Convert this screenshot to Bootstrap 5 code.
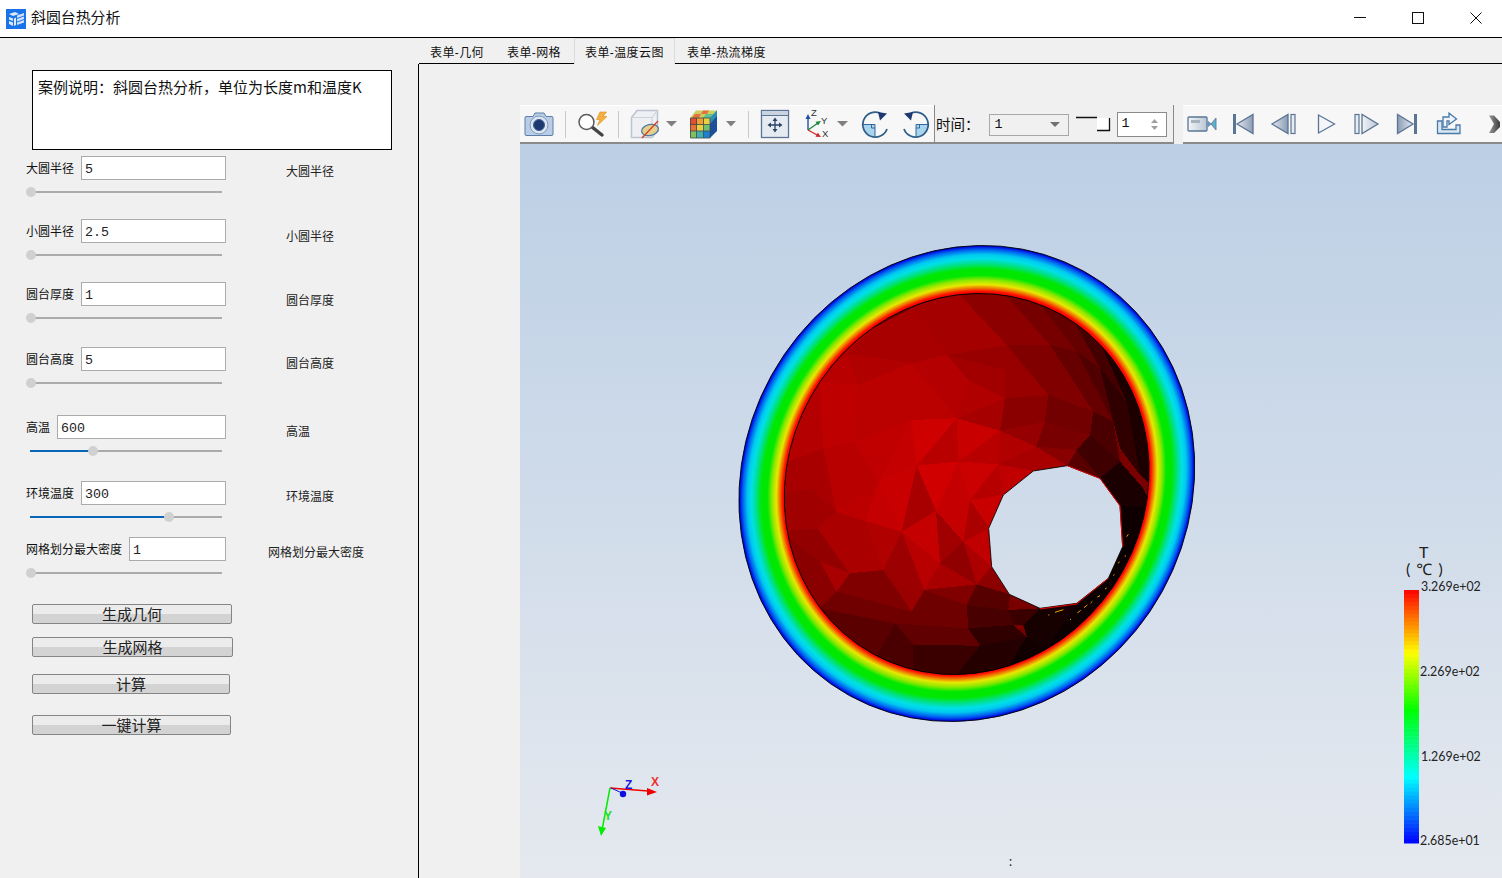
<!DOCTYPE html>
<html lang="zh">
  <head>
    <meta charset="UTF-8" />
    <meta name="viewport" content="width=device-width, initial-scale=1.0" />
    <title>斜圆台热分析</title>
    <link
      rel="stylesheet"
      href="https://cdn.jsdelivr.net/npm/bootstrap@5.3.0/dist/css/bootstrap.min.css"
    />
    <style>
      html, body { height: 100%; overflow: hidden; }
      body { background: #f0f0f0; color: #111; font-family: "Liberation Sans", "Noto Sans CJK SC", sans-serif; font-size: 12px; }
      svg { display: block; flex: none; }

      .titlebar { height: 38px; background: #fff; border-bottom: 1px solid #000; padding-left: 6px; }
      .app-title { font-size: 14.9px; margin-left: 5px; line-height: 20px; margin-bottom: 1px; }
      .win-btns { gap: 46px; padding-right: 20px; margin-bottom: 1px; }

      .workspace { height: 840px; }
      .side { width: 418px; flex: none; padding: 32px 0 0 26px; }
      .case-box { width: 360px; height: 80px; margin-left: 6px; padding: 6px 5px; background: #fff; border: 1px solid #000; font-family: "Noto Sans CJK SC", "Liberation Sans", sans-serif; font-size: 15px; line-height: 20px; white-space: nowrap; }

      .param-left { width: 200px; flex: none; padding-bottom: 5px; }
      .param-row { gap: 7px; height: 24px; }
      .param-left label { line-height: 22px; padding-top: 2px; flex: none; }
      .value-input { height: 24px; min-height: 0; padding: 2px 3px 0; border: 1px solid #ababab; border-radius: 0; background: #fff; color: #222; font-family: "Liberation Mono", monospace; font-size: 13.33px; line-height: 20px; }
      .note-text { line-height: 16px; color: #222; }

      .p1 { margin-top: 6px; } .p1 .note-text { margin: 8px 0 0 60px; }
      .p2 { margin-top: 17px; } .p2 .note-text { margin: 10px 0 0 60px; }
      .p3 { margin-top: 17px; } .p3 .note-text { margin: 11px 0 0 60px; }
      .p4 { margin-top: 19px; } .p4 .note-text { margin: 9px 0 0 60px; }
      .p5 { margin-top: 22px; } .p5 .note-text { margin: 9px 0 0 60px; }
      .p6 { margin-top: 20px; } .p6 .note-text { margin: 8px 0 0 60px; }
      .p7 { margin-top: 10px; } .p7 .note-text { margin: 8px 0 0 42px; }

      .hslider { display: block; width: 196px; height: 10px; margin: 7px 0 0; padding: 0; -webkit-appearance: none; appearance: none; background: transparent; --fill: 0%; }
      .hslider::-webkit-slider-runnable-track { height: 10px; background: linear-gradient(#0a64b8, #0a64b8) 4px center / var(--fill) 2px no-repeat, linear-gradient(#ababab, #ababab) 4px center / calc(100% - 4px) 2px no-repeat; }
      .hslider::-webkit-slider-thumb { -webkit-appearance: none; width: 10px; height: 10px; border-radius: 50%; background: #d0d0d0; border: 0; }

      .act-btn { display: block; height: 20px; margin-left: 6px; padding: 0; border: 1px solid #858585; border-radius: 2px; background: linear-gradient(#ececec 50%, #d3d3d3 50%); color: #222; font-size: 15px; line-height: 19px; }
      .a1 { width: 200px; margin-top: 21px; }
      .a2 { width: 201px; margin-top: 13px; }
      .a3 { width: 198px; margin-top: 17px; }
      .a4 { width: 199px; margin-top: 21px; }

      .main-pane { min-width: 0; }
      .tab-strip { height: 26px; margin-left: 1px; padding-left: 0; border-bottom: 1px solid #000; flex-wrap: nowrap; }
      .tab-item { height: 25px; padding: 7px 10px 0 11px; line-height: 16px; color: #111; text-decoration: none; white-space: nowrap; letter-spacing: .4px; }
      .tab-item.t1 { width: 77px; }
      .tab-item.t2 { width: 78px; }
      .tab-item.t3 { width: 101px; border: 1px solid #dcdcdc; border-bottom: 0; height: 26px; padding: 6px 0 0 10px; margin-bottom: -1px; background: #f0f0f0; }
      .tab-item.t4 { padding-left: 12px; }

      .tab-body { height: 814px; padding: 41px 0 0 101px; border-left: 1px solid #000; overflow: hidden; }
      .tool-row { height: 39px; width: 982px; }
      .tool-group { height: 39px; background: #f7f7f7; border-top: 1px solid #fff; border-bottom: 2px solid #8a8a8a; }
      .time-group { width: 240px; height: 39px; flex: none; border-left: 1px solid #8a8a8a; border-right: 1px solid #8a8a8a; border-bottom: 2px solid #8a8a8a; padding: 0 0 0 1px; font-size: 14.5px; }
      .time-label { font-family: "Noto Sans CJK SC", sans-serif; white-space: nowrap; }
      .right-tools { margin-left: 9px; overflow: hidden; }
      .combo-box { width: 80px; height: 22px; margin: 2px 0 0 9px; padding-left: 5px; border: 1px solid #a8a8a8; background: #f0f0f0; font-family: "Liberation Mono", monospace; font-size: 13.33px; }
      .step-mark { margin-left: 7px; }
      .spin-box { width: 50px; height: 25px; margin: 1px 0 0 6px; padding-left: 4px; border: 1px solid #8a8a8a; background: #fff; font-family: "Liberation Mono", monospace; font-size: 13.33px; }

      .view3d { width: 982px; height: 734px; background: linear-gradient(#bccfe5, #e5e9ef); }
      .facets polygon, .facets rect { shape-rendering: crispEdges; }
      .legend-text { font-family: Lato, "Noto Sans", sans-serif; font-size: 12.4px; fill: #222; }
      .legend-title { font-size: 16px; word-spacing: 2px; }
      .triad-text { font-family: "Liberation Sans", sans-serif; font-size: 12px; font-weight: 700; }
      .tip-text { font-family: "Liberation Sans", sans-serif; font-size: 9.5px; fill: #333; }
    </style>
  </head>
  <body>
    <header class="titlebar d-flex align-items-center">
      <svg width="20" height="20" viewBox="0 0 20 20" aria-hidden="true">
        <rect width="20" height="20" fill="#1a73e8" />
        <path d="M3 5 9 3 13 5 7 7Z M3 8 7 9.500V12L3 10.500Z M3 12 7 13.500V17L3 15Z M8 9.500 10 8.500V16L8 17Z" fill="#dbe9fb" />
        <path d="M11 6.500 18 4V6.500L11 9Z M11 10 18 7.500V10L11 12.500Z M11 13.500 18 11V13.500L11 16Z" fill="#cfe2fa" />
      </svg>
      <span class="app-title">斜圆台热分析</span>
      <div class="win-btns d-flex align-items-center ms-auto">
        <svg width="12" height="12" viewBox="0 0 12 12"><path d="M0 5.500H12" stroke="#111" fill="none" /></svg>
        <svg width="12" height="12" viewBox="0 0 12 12"><rect x=".5" y=".5" width="11" height="11" stroke="#111" fill="none" /></svg>
        <svg width="12" height="12" viewBox="0 0 12 12"><path d="M.5 .5 11.500 11.500M11.500 .5 .5 11.500" stroke="#111" fill="none" /></svg>
      </div>
    </header>

    <div class="workspace d-flex">
      <aside class="side">
        <div class="case-box">案例说明&#xFF1A;斜圆台热分析&#xFF0C;单位为长度m和温度K</div>

        <div class="p1 d-flex">
          <div class="param-left">
            <div class="param-row d-flex"><label>大圆半径</label><input class="form-control value-input" value="5" /></div>
            <input type="range" class="hslider" min="0" max="100" value="0" />
          </div>
          <span class="note-text">大圆半径</span>
        </div>
        <div class="p2 d-flex">
          <div class="param-left">
            <div class="param-row d-flex"><label>小圆半径</label><input class="form-control value-input" value="2.5" /></div>
            <input type="range" class="hslider" min="0" max="100" value="0" />
          </div>
          <span class="note-text">小圆半径</span>
        </div>
        <div class="p3 d-flex">
          <div class="param-left">
            <div class="param-row d-flex"><label>圆台厚度</label><input class="form-control value-input" value="1" /></div>
            <input type="range" class="hslider" min="0" max="100" value="0" />
          </div>
          <span class="note-text">圆台厚度</span>
        </div>
        <div class="p4 d-flex">
          <div class="param-left">
            <div class="param-row d-flex"><label>圆台高度</label><input class="form-control value-input" value="5" /></div>
            <input type="range" class="hslider" min="0" max="100" value="0" />
          </div>
          <span class="note-text">圆台高度</span>
        </div>
        <div class="p5 d-flex">
          <div class="param-left">
            <div class="param-row d-flex"><label>高温</label><input class="form-control value-input" value="600" /></div>
            <input type="range" class="hslider" min="0" max="100" step="0.5" value="33.5" style="--fill: 33%" />
          </div>
          <span class="note-text">高温</span>
        </div>
        <div class="p6 d-flex">
          <div class="param-left">
            <div class="param-row d-flex"><label>环境温度</label><input class="form-control value-input" value="300" /></div>
            <input type="range" class="hslider" min="0" max="100" value="74" style="--fill: 72%" />
          </div>
          <span class="note-text">环境温度</span>
        </div>
        <div class="p7 d-flex">
          <div class="param-left">
            <div class="param-row d-flex"><label>网格划分最大密度</label><input class="form-control value-input" value="1" /></div>
            <input type="range" class="hslider" min="0" max="100" value="0" />
          </div>
          <span class="note-text">网格划分最大密度</span>
        </div>

        <button type="button" class="btn act-btn a1">生成几何</button>
        <button type="button" class="btn act-btn a2">生成网格</button>
        <button type="button" class="btn act-btn a3">计算</button>
        <button type="button" class="btn act-btn a4">一键计算</button>
      </aside>

      <main class="main-pane flex-grow-1">
        <nav class="tab-strip nav">
          <a class="tab-item t1" href="#">表单-几何</a>
          <a class="tab-item t2" href="#">表单-网格</a>
          <a class="tab-item t3" href="#">表单-温度云图</a>
          <a class="tab-item t4" href="#">表单-热流梯度</a>
        </nav>

        <div class="tab-body">
          <div class="tool-row d-flex">
            <div class="tool-group d-flex">
              <svg width="45" height="36" viewBox="520 106 45 36">
                <defs>
                  <linearGradient id="steel" x1="0" y1="0" x2="1" y2="0"><stop offset="0" stop-color="#8a9cb4" /><stop offset="1" stop-color="#e4e9f0" /></linearGradient>
                  <linearGradient id="steelR" x1="0" y1="0" x2="1" y2="0"><stop offset="0" stop-color="#e4e9f0" /><stop offset="1" stop-color="#8a9cb4" /></linearGradient>
                  <linearGradient id="barFill" x1="0" y1="0" x2="1" y2="0"><stop offset="0" stop-color="#f3f5f8" /><stop offset="1" stop-color="#b9c6d6" /></linearGradient>
                  <linearGradient id="edgeShade" x1="0" y1="0" x2="1" y2="0"><stop offset="0" stop-color="#9a9a9a" /><stop offset="1" stop-color="#3a3a3a" /></linearGradient>
                </defs>
                <path d="M526 116.500H533L535 113H544L546 116.500H552Q553 116.500 553 118V134Q553 135.500 552 135.500H526Q525 135.500 525 134V118Q525 116.500 526 116.500Z" fill="#b9cee6" stroke="#5c7ea8" />
                <circle cx="539" cy="125" r="9" fill="#dbe6f2" stroke="#7e9abb" />
                <circle cx="539" cy="125" r="5.500" fill="#1c3a70" stroke="#3f5f90" />
              </svg>
              <svg width="53" height="36" viewBox="565 106 53 36">
                <path d="M565.500 111V138" stroke="#c9c9c9" />
                <path d="M592 127 602 135" stroke="#444" stroke-width="3.500" stroke-linecap="round" />
                <circle cx="586.500" cy="122" r="7.500" fill="#fff" stroke="#5a5a5a" stroke-width="1.500" />
                <path d="M600 112H606.500L603 116.500H607L597.500 125.500 600 119.500H596.500Z" fill="#f3b040" stroke="#dc8f18" stroke-width=".6" />
              </svg>
              <svg width="66" height="36" viewBox="618 106 66 36">
                <path d="M618.500 111V138" stroke="#c9c9c9" />
                <path d="M631.500 117.500 637 110.500H657.500V131L652 137.500H631.500Z" fill="#eef0f3" stroke="#bcc4d0" stroke-width="1.500" />
                <path d="M631.500 117.500H652V137.500M652 117.500 657.500 110.500" fill="none" stroke="#cdd3dc" stroke-width="1.200" />
                <ellipse cx="650" cy="130" rx="8.500" ry="5.500" transform="rotate(-12 650 130)" fill="#e4cf8c" stroke="#4f79a8" stroke-width="1.300" />
                <path d="M642 138 658 121" stroke="#d0452a" stroke-width="1.400" />
                <path d="M666 121H677L671.500 126.500Z" fill="#808080" />
              </svg>
              <svg width="64" height="36" viewBox="684 106 64 36">
                <path d="M690 118 696 110.500H717L710 118Z" fill="#c8d060" />
                <path d="M692 118 695 114H701L699 118ZM701 114 703 110.500H709L707 114Z" fill="#e87040" />
                <path d="M703 118 706 114H713L710 118Z" fill="#60c090" />
                <path d="M710 118 717 110.500V131L710 138Z" fill="#1d4f9c" />
                <path d="M710 118 717 110.500V116L710 124Z" fill="#2a90b0" />
                <rect x="690" y="118" width="7" height="7" fill="#e05030" />
                <rect x="697" y="118" width="7" height="7" fill="#f0a030" />
                <rect x="704" y="118" width="6" height="7" fill="#e8d040" />
                <rect x="690" y="125" width="7" height="6" fill="#e87030" />
                <rect x="697" y="125" width="7" height="6" fill="#e8d040" />
                <rect x="704" y="125" width="6" height="6" fill="#70c070" />
                <rect x="690" y="131" width="7" height="7" fill="#80c060" />
                <rect x="697" y="131" width="7" height="7" fill="#40b0b0" />
                <rect x="704" y="131" width="6" height="7" fill="#2080d0" />
                <path d="M696.500 118V138M703.500 118V138M690 124.500H710M690 131H710M690.500 118V138H710V118Z" fill="none" stroke="#3a4a50" stroke-width=".8" />
                <path d="M726 121H736L731 126.500Z" fill="#808080" />
              </svg>
              <svg width="50" height="36" viewBox="748 106 50 36">
                <path d="M748.500 111V138" stroke="#c9c9c9" />
                <rect x="761.500" y="110.500" width="27" height="27" fill="#e6ebf1" stroke="#5b7595" stroke-width="1.300" />
                <rect x="762" y="111" width="26" height="4" fill="#c9d4e0" />
                <path d="M762 115.500H788" stroke="#5b7595" />
                <path d="M775 120.500V129.500M770.500 125H779.500" stroke="#2a4468" stroke-width="1.300" />
                <path d="M775 117.500 777.500 121H772.500ZM775 132.500 777.500 129H772.500ZM767.500 125 771 122.500V127.500ZM782.500 125 779 122.500V127.500Z" fill="#2a4468" />
              </svg>
              <svg width="57" height="36" viewBox="798 106 57 36">
                <path d="M808 130V118" stroke="#2050a8" stroke-width="1.400" />
                <path d="M808 114 805.500 119H810.500Z" fill="#2050a8" />
                <path d="M808 130 818 123" stroke="#1c8a3c" stroke-width="1.400" />
                <path d="M821 121 815.500 121.800 818 125.500Z" fill="#1c8a3c" />
                <path d="M808 130 818 135.500" stroke="#d02828" stroke-width="1.400" />
                <path d="M821 137 815.500 136.800 817.800 132.800Z" fill="#d02828" />
                <text class="tip-text" x="811" y="116">Z</text>
                <text class="tip-text" x="821" y="124">Y</text>
                <text class="tip-text" x="822" y="137">X</text>
                <path d="M837 121H848L842.500 126.500Z" fill="#808080" />
              </svg>
              <svg width="40" height="36" viewBox="855 106 40 36">
                <path d="M875 124.500H863.500A11.500 11.500 0 0 0 875 136Z" fill="#a9d4ee" />
                <path d="M863 124.500H875V136.500M871.500 124.500V128H875" fill="none" stroke="#2f6a98" />
                <path d="M887 129A12.500 12.500 0 1 1 880 113" fill="none" stroke="#2f5f8a" stroke-width="1.800" />
                <path d="M878 112 887 113.500 880 120.500Z" fill="#1c3a70" />
              </svg>
              <svg width="39" height="36" viewBox="895 106 39 36">
                <path d="M916 124.500H927.500A11.500 11.500 0 0 1 916 136Z" fill="#a9d4ee" />
                <path d="M928 124.500H916V136.500M919.500 124.500V128H916" fill="none" stroke="#2f6a98" />
                <path d="M904 129A12.500 12.500 0 1 0 911 113" fill="none" stroke="#2f5f8a" stroke-width="1.800" />
                <path d="M913 112 904 113.500 911 120.500Z" fill="#1c3a70" />
              </svg>
            </div>

            <div class="time-group d-flex align-items-center">
              <span class="time-label">时间&#xFF1A;</span>
              <div class="combo-box d-flex align-items-center justify-content-between">
                <span>1</span>
                <svg width="10" height="5" viewBox="0 0 10 5" class="me-2"><path d="M0 0H10L5 5Z" fill="#707070" /></svg>
              </div>
              <svg class="step-mark" width="35" height="16" viewBox="0 0 35 16">
                <rect x="21" y="2" width="12" height="12" fill="#fff" />
                <path d="M0 1.500H21M21 14.500H33.500V2" fill="none" stroke="#111" stroke-width="1.300" />
              </svg>
              <div class="spin-box d-flex align-items-center justify-content-between">
                <span>1</span>
                <svg class="me-2" width="7" height="13" viewBox="0 0 7 13"><path d="M3.500 1 7 5H0ZM3.500 12 7 8H0Z" fill="#a0a0a0" /></svg>
              </div>
            </div>

            <div class="tool-group right-tools flex-grow-1 d-flex">
              <svg width="319" height="36" viewBox="1183 106 319 36">
                <rect x="1188" y="117" width="19" height="14" rx="1" fill="url(#barFill)" stroke="#5b7595" stroke-width="1.300" />
                <rect x="1191" y="120" width="9" height="3" fill="#a8b2be" />
                <path d="M1208 121.500 1211 124 1216 118V130L1211 124 1208 126.500Z" fill="#58aecb" stroke="#6a85a5" />

                <path d="M1234.500 114V134" stroke="#5b7595" stroke-width="3" />
                <path d="M1237 124 1253 114.500V133.500Z" fill="url(#steelR)" stroke="#5b7595" stroke-width="1.300" />

                <path d="M1288 114.500V133.500L1272 124Z" fill="url(#steelR)" stroke="#5b7595" stroke-width="1.300" />
                <rect x="1291" y="114.500" width="4" height="19" fill="#e8ecf1" stroke="#5b7595" stroke-width="1.200" />

                <path d="M1318.500 115V133L1334.500 124Z" fill="#f4f6f9" stroke="#5b7595" stroke-width="1.300" />

                <rect x="1355" y="114.500" width="4" height="19" fill="#e8ecf1" stroke="#5b7595" stroke-width="1.200" />
                <path d="M1362 114.500V133.500L1378 124Z" fill="url(#barFill)" stroke="#5b7595" stroke-width="1.300" />

                <path d="M1397.500 114.500V133.500L1413 124Z" fill="url(#steel)" stroke="#5b7595" stroke-width="1.300" />
                <path d="M1415.500 114V134" stroke="#5b7595" stroke-width="3" />

                <path d="M1437.500 121V133.500H1460V125H1456V129.500H1442V121Z" fill="#dbe8f4" stroke="#4a7aa8" stroke-width="1.300" />
                <path d="M1443 127V117H1449V113L1456.500 119 1449 124.500V121H1447V127Z" fill="#eef4fa" stroke="#4a7aa8" stroke-width="1.300" />

                <path d="M1489 115.500H1494L1500 122V127L1494 133H1489L1494 124Z" fill="url(#edgeShade)" />
              </svg>
            </div>
          </div>

          <div class="view3d">
            <svg width="982" height="734" viewBox="520 144 982 734">
              <defs>
                <radialGradient id="tempRing" cx=".5" cy=".5" r=".5">
                  <stop offset=".8" stop-color="#f00000" />
                  <stop offset=".808" stop-color="#ff1000" />
                  <stop offset=".82" stop-color="#f07000" />
                  <stop offset=".836" stop-color="#e8e800" />
                  <stop offset=".855" stop-color="#90e800" />
                  <stop offset=".875" stop-color="#00e800" />
                  <stop offset=".9" stop-color="#00e800" />
                  <stop offset=".925" stop-color="#00e090" />
                  <stop offset=".945" stop-color="#00e0e8" />
                  <stop offset=".962" stop-color="#00c8f0" />
                  <stop offset=".983" stop-color="#0060f0" />
                  <stop offset=".995" stop-color="#0010e0" />
                  <stop offset="1" stop-color="#0000c8" />
                </radialGradient>
                <linearGradient id="holeBg" gradientUnits="userSpaceOnUse" x1="0" y1="-273" x2="0" y2="1929">
                  <stop offset="0" stop-color="#bccfe5" />
                  <stop offset="1" stop-color="#e5e9ef" />
                </linearGradient>
                <clipPath id="innerClip">
                  <ellipse cx="710" cy="747" rx="536" ry="582" transform="rotate(29 710 747)" />
                </clipPath>
              </defs>

              <ellipse cx="966.800" cy="483.500" rx="223.300" ry="242.400" transform="rotate(29 966.800 483.500)" fill="url(#tempRing)" stroke="#000" stroke-width=".8" />

              <!-- cone mesh, coordinates are 3x from the ring's corner -->
              <g transform="translate(730 235) scale(.33333)">
                <g class="facets" clip-path="url(#innerClip)">
                  <rect x="100" y="100" width="1200" height="1300" fill="#7a0000" />
                  <rect x="100" y="300" width="330" height="780" fill="#a80000" />
                  <polygon fill="#a80000" points="430,280 555,215 650,360 545,385 350,355" />
                  <polygon fill="#a40000" points="555,215 555,150 680,170 830,330 650,360" />
                  <polygon fill="#980000" points="650,360 830,330 955,480 825,490" />
                  <polygon fill="#8c0000" points="680,170 800,150 960,330 830,330" />
                  <polygon fill="#800000" points="830,330 960,330 1090,530 955,480" />
                  <polygon fill="#760000" points="800,150 900,170 1040,350 960,330" />
                  <polygon fill="#660000" points="960,330 1040,350 1150,560 1090,530" />
                  <polygon fill="#640000" points="900,170 1010,220 1110,400 1040,350" />
                  <polygon fill="#500000" points="1040,350 1110,400 1170,640 1150,560" />
                  <polygon fill="#440000" points="1010,220 1100,300 1190,500 1110,400" />
                  <polygon fill="#300000" points="1110,400 1190,500 1230,720 1170,640" />
                  <polygon fill="#1c0000" points="1100,300 1270,480 1270,760 1230,720 1190,500" />
                  <polygon fill="#b00000" points="350,355 545,385 385,450" />
                  <polygon fill="#bb0000" points="385,450 545,385 680,550 545,555 375,620" />
                  <polygon fill="#b40000" points="545,385 650,360 715,435 680,550" />
                  <polygon fill="#a20000" points="650,360 825,405 825,490 715,435" />
                  <polygon fill="#b00000" points="715,435 825,490 680,550" />
                  <polygon fill="#8a0000" points="825,490 955,480 945,560 810,587" />
                  <polygon fill="#a60000" points="825,490 810,587 680,550" />
                  <polygon fill="#720000" points="955,480 1090,530 1080,600 945,560" />
                  <polygon fill="#4a0000" points="1090,530 1150,560 1170,680 1080,600" />
                  <polygon fill="#780000" points="945,560 1080,600 1040,645 918,635" />
                  <polygon fill="#960000" points="810,587 945,560 918,635" />
                  <polygon fill="#b00000" points="810,587 918,635 805,688" />
                  <polygon fill="#c80000" points="680,550 810,587 685,680" />
                  <polygon fill="#b80000" points="685,680 810,587 805,688" />
                  <polygon fill="#880000" points="918,635 1040,645 1012,692" />
                  <polygon fill="#a80000" points="805,688 918,635 1012,692 910,708" />
                  <polygon fill="#3e0000" points="1040,645 1080,600 1170,680 1110,730" />
                  <polygon fill="#580000" points="1012,692 1040,645 1110,730" />
                  <polygon fill="#c00000" points="805,688 910,708 820,780" />
                  <polygon fill="#cb0000" points="685,680 805,688 720,795" />
                  <polygon fill="#b60000" points="720,795 805,688 820,780" />
                  <polygon fill="#cf0000" points="545,555 680,550 560,692" />
                  <polygon fill="#b80000" points="680,550 685,680 560,692" />
                  <polygon fill="#d00000" points="560,692 685,680 618,828" />
                  <polygon fill="#c40000" points="685,680 720,795 618,828" />
                  <polygon fill="#c80000" points="445,745 560,692 515,890" />
                  <polygon fill="#a80000" points="560,692 618,828 515,890" />
                  <polygon fill="#c40000" points="618,828 720,795 700,920" />
                  <polygon fill="#c80000" points="720,795 820,780 778,880" />
                  <polygon fill="#aa0000" points="720,795 778,880 700,920" />
                  <polygon fill="#a00000" points="618,828 700,920 630,985" />
                  <polygon fill="#c40000" points="515,890 618,828 630,985" />
                  <polygon fill="#c00000" points="700,920 778,880 785,995" />
                  <polygon fill="#ac0000" points="700,920 785,995 740,1048" />
                  <polygon fill="#900000" points="630,985 700,920 740,1048" />
                  <polygon fill="#b80000" points="515,890 630,985 583,1065" />
                  <polygon fill="#9c0000" points="515,890 583,1065 460,1005" />
                  <polygon fill="#a80000" points="630,985 740,1048 583,1065" />
                  <polygon fill="#8c0000" points="740,1048 785,995 840,1078" />
                  <polygon fill="#560000" points="740,1048 840,1078 835,1125 710,1110" />
                  <polygon fill="#800000" points="583,1065 740,1048 710,1110" />
                  <polygon fill="#b00000" points="405,858 515,890 460,1005" />
                  <polygon fill="#c40000" points="445,745 515,890 405,858" />
                  <polygon fill="#c00000" points="375,620 545,555 445,745" />
                  <polygon fill="#c40000" points="545,555 560,692 445,745" />
                  <polygon fill="#bf0000" points="270,440 385,450 375,620 280,640" />
                  <polygon fill="#b80000" points="350,355 385,450 270,440" />
                  <polygon fill="#b00000" points="430,280 350,355 270,440 300,300" />
                  <polygon fill="#b80000" points="280,640 375,620 445,745 318,830" />
                  <polygon fill="#bc0000" points="318,830 445,745 405,858" />
                  <polygon fill="#a80000" points="150,690 280,640 318,830 245,760" />
                  <polygon fill="#b40000" points="270,440 280,640 150,690 180,500" />
                  <polygon fill="#a00000" points="150,780 245,760 318,830 262,880 150,890" />
                  <polygon fill="#aa0000" points="318,830 405,858 460,1005 360,1015 262,880" />
                  <polygon fill="#920000" points="150,890 262,880 360,1015 270,980" />
                  <polygon fill="#8a0000" points="150,890 270,980 320,1070 265,1120 190,1020" />
                  <polygon fill="#800000" points="320,1070 360,1015 460,1005 545,1130" />
                  <polygon fill="#9a0000" points="460,1005 583,1065 545,1130" />
                  <polygon fill="#6e0000" points="545,1130 583,1065 710,1110 715,1180 495,1165" />
                  <polygon fill="#700000" points="265,1120 320,1070 545,1130 495,1165" />
                  <polygon fill="#5a0000" points="265,1120 495,1165 440,1265 350,1210" />
                  <polygon fill="#600000" points="495,1165 715,1180 750,1232 550,1230" />
                  <polygon fill="#4a0000" points="440,1265 495,1165 550,1230 550,1330 400,1300" />
                  <polygon fill="#3a0000" points="550,1330 550,1230 750,1232 665,1340" />
                  <polygon fill="#480000" points="710,1110 835,1125 850,1170 715,1180" />
                  <polygon fill="#300000" points="715,1180 850,1170 890,1205 750,1232" />
                  <polygon fill="#3a0000" points="835,1125 930,1120 880,1170 850,1170" />
                  <polygon fill="#240000" points="665,1340 750,1232 890,1205 820,1320" />
                  <polygon fill="#160000" points="930,1120 1040,1105 950,1240 890,1205 880,1170" />
                  <polygon fill="#100000" points="820,1320 890,1205 950,1240 960,1300" />
                  <polygon fill="#0c0000" points="950,1240 1040,1105 1140,1060 1080,1200 960,1300" />
                  <polygon fill="#0a0000" points="1040,1105 1135,1030 1178,935 1250,920 1140,1100" />
                  <polygon fill="#0e0000" points="1178,935 1170,812 1270,820 1250,920" />
                  <polygon fill="#1a0000" points="1170,812 1110,730 1170,680 1240,760 1270,820" />
                </g>
                <ellipse cx="710" cy="747" rx="536" ry="582" transform="rotate(29 710 747)" fill="none" stroke="#000" stroke-width="2.500" />
                <polygon points="910,708 1012,692 1110,730 1170,812 1178,935 1135,1030 1040,1105 930,1120 838,1078 785,995 776,880 820,780" fill="url(#holeBg)" stroke="#000" stroke-width="2.500" />
                <path d="M1012 692 1110 730 1170 812 1178 935M930 1122 1040 1107 1135 1030" fill="none" stroke="#ee0000" stroke-width="3" />
                <path d="M955 1140h3M975 1132l25-8M1020 1153h3M1042 1134l10-8M1062 1118l10-8M1082 1104l5-5M1102 1086l8-4M1125 1062l5-3M1150 1022l3-4M1165 985l3-5M1185 965l2-4M1190 905l5-7" stroke="#f0a000" stroke-width="3" fill="none" />
              </g>

              <!-- orientation triad -->
              <path d="M610 788 648 791" stroke="#f00000" stroke-width="1.500" />
              <path d="M647 788 657 792 647 795.500Z" fill="#f00000" />
              <path d="M610 788 602 830" stroke="#00ee00" stroke-width="1.500" />
              <path d="M598 826 606 828 601 836Z" fill="#00ee00" />
              <path d="M611 788 622 793" stroke="#1010e0" />
              <circle cx="623" cy="794" r="3.200" fill="#1010e0" />
              <text class="triad-text" x="651" y="786" fill="#f03030">X</text>
              <text class="triad-text" x="625" y="789" fill="#1818e0">Z</text>
              <text class="triad-text" x="604" y="820" fill="#20e020">Y</text>

              <!-- scalar bar -->
              <g id="scale-bands"></g>
              <text class="legend-text legend-title" x="1419" y="558">T</text>
              <text class="legend-text legend-title" x="1406" y="575">( ℃ )</text>
              <text class="legend-text" x="1421" y="591">3.269e+02</text>
              <text class="legend-text" x="1420" y="676">2.269e+02</text>
              <text class="legend-text" x="1421" y="761">1.269e+02</text>
              <text class="legend-text" x="1420" y="845">2.685e+01</text>
              <text class="legend-text" x="1009" y="866">:</text>
            </svg>
          </div>
        </div>
      </main>
    </div>

    <script src="https://cdn.jsdelivr.net/npm/bootstrap@5.3.0/dist/js/bootstrap.bundle.min.js"></script>
    <script>
      // colour bands of the temperature bar, hot at the top
      const stops = [
        [0, [255, 0, 0]],
        [0.25, [255, 255, 0]],
        [0.475, [0, 255, 0]],
        [0.74, [0, 255, 255]],
        [1, [0, 0, 255]],
      ];

      function colourAt(t) {
        for (let i = 1; i < stops.length; i++) {
          if (t <= stops[i][0]) {
            const [t0, c0] = stops[i - 1];
            const [t1, c1] = stops[i];
            const k = (t - t0) / (t1 - t0);
            return c0.map((v, n) => Math.round(v + (c1[n] - v) * k));
          }
        }
        return stops[stops.length - 1][1];
      }

      const bands = document.getElementById("scale-bands");
      const bandCount = 64;
      const bandHeight = 253 / bandCount;
      for (let i = 0; i < bandCount; i++) {
        const rect = document.createElementNS("http://www.w3.org/2000/svg", "rect");
        rect.setAttribute("x", 1404);
        rect.setAttribute("y", 590 + i * bandHeight);
        rect.setAttribute("width", 15);
        rect.setAttribute("height", bandHeight + 0.5);
        rect.setAttribute("fill", `rgb(${colourAt((i + 0.5) / bandCount).join(",")})`);
        bands.appendChild(rect);
      }
    </script>
  </body>
</html>
